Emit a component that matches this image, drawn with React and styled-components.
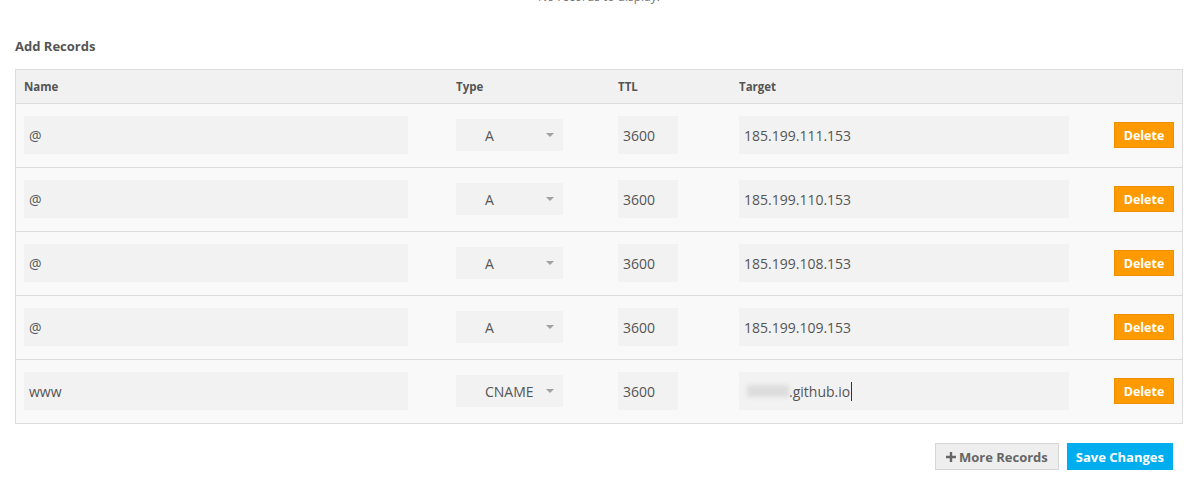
import React from "react";
import styled, { createGlobalStyle } from "styled-components";

const Global = createGlobalStyle`
  html, body { margin: 0; padding: 0; background: #fff; }
  body { font-family: "Open Sans", "Liberation Sans", sans-serif; color: #555; }
  * { box-sizing: border-box; }
`;

const Page = styled.div`
  width: 1183px;
  padding-left: 15px;
`;

const EmptyNote = styled.div`
  margin-top: -10px;
  height: 14px;
  line-height: 14px;
  font-size: 12px;
  color: #777;
  text-align: center;
`;

const Heading = styled.h3`
  margin: 32px 0 0 0;
  height: 20px;
  line-height: 20px;
  font-size: 13px;
  font-weight: 700;
  color: #555;
`;

const Table = styled.div`
  margin-top: 13px;
  border: 1px solid #dcdcdc;
  background: #f9f9f9;
`;

const cols = "432px 162px 121px 375px 1fr";

const HeaderRow = styled.div`
  display: grid;
  grid-template-columns: ${cols};
  align-items: center;
  height: 33px;
  padding-left: 8px;
  background: #f1f1f1;
`;

const HeadCell = styled.div`
  font-size: 11.5px;
  font-weight: 700;
  color: #555;
`;

const Row = styled.div`
  display: grid;
  grid-template-columns: ${cols};
  align-items: center;
  height: 64px;
  padding-left: 8px;
  padding-bottom: 1px;
  border-top: 1px solid #dcdcdc;
`;

const Field = styled.div`
  width: ${(p) => p.$w}px;
  height: 38px;
  background: #f2f2f2;
  padding-left: 5px;
  display: flex;
  align-items: center;
  font-size: 14px;
  color: #555;
  white-space: nowrap;
`;

const Select = styled.div`
  position: relative;
  width: 107px;
  height: 32px;
  background: #f2f2f2;
  padding-left: 29px;
  display: flex;
  align-items: center;
  font-size: 14px;
  color: #555;
`;

const Caret = styled.span`
  position: absolute;
  right: 9px;
  top: 14px;
  width: 0;
  height: 0;
  border-left: 4px solid transparent;
  border-right: 4px solid transparent;
  border-top: 4px solid #a0a0a0;
`;

const Blurred = styled.span`
  display: inline-block;
  width: 42px;
  height: 12px;
  margin-left: 3px;
  background: #dcdcdc;
  filter: blur(2px);
`;

const TextCursor = styled.span`
  display: inline-block;
  width: 1px;
  height: 19px;
  background: #333;
  margin-left: 1px;
`;

const Action = styled.div`
  display: flex;
  justify-content: flex-end;
  padding-right: 8px;
`;

const DeleteBtn = styled.button`
  width: 60px;
  height: 26px;
  border: 1px solid #f09000;
  background: #ff9a00;
  color: #fff;
  font-family: "Open Sans", "Liberation Sans", sans-serif;
  font-size: 12.5px;
  font-weight: 700;
  padding: 0;
  cursor: pointer;
`;

const Footer = styled.div`
  display: flex;
  justify-content: flex-end;
  gap: 8px;
  margin-top: 19px;
  padding-right: 10px;
`;

const Btn = styled.button`
  height: 27px;
  padding: 0 ${(p) => (p.$primary ? 8 : 10)}px;
  border: 1px solid ${(p) => (p.$primary ? "#00aeef" : "#d6d6d6")};
  background: ${(p) => (p.$primary ? "#00aeef" : "#eeeeee")};
  color: ${(p) => (p.$primary ? "#fff" : "#666")};
  font-family: "Open Sans", "Liberation Sans", sans-serif;
  font-size: 13px;
  font-weight: 700;
  display: flex;
  align-items: center;
  gap: 3px;
  cursor: pointer;
`;

const records = [
  { name: "@", type: "A", ttl: "3600", target: "185.199.111.153" },
  { name: "@", type: "A", ttl: "3600", target: "185.199.110.153" },
  { name: "@", type: "A", ttl: "3600", target: "185.199.108.153" },
  { name: "@", type: "A", ttl: "3600", target: "185.199.109.153" },
  { name: "www", type: "CNAME", ttl: "3600", target: ".github.io", hidden: true },
];

const Plus = () => (
  <svg width="10" height="10" viewBox="0 0 10 10">
    <path d="M3.8 0h2.4v3.8H10v2.4H6.2V10H3.8V6.2H0V3.8h3.8z" fill="#666" />
  </svg>
);

export default function App() {
  return (
    <Page>
      <Global />
      <EmptyNote>No records to display.</EmptyNote>
      <Heading>Add Records</Heading>
      <Table>
        <HeaderRow>
          <HeadCell>Name</HeadCell>
          <HeadCell>Type</HeadCell>
          <HeadCell>TTL</HeadCell>
          <HeadCell>Target</HeadCell>
          <HeadCell />
        </HeaderRow>
        {records.map((r, i) => (
          <Row key={i}>
            <Field $w={384}>{r.name}</Field>
            <Select>
              {r.type}
              <Caret />
            </Select>
            <Field $w={60}>{r.ttl}</Field>
            <Field $w={330}>
              {r.hidden && <Blurred />}
              {r.target}
              {r.hidden && <TextCursor />}
            </Field>
            <Action>
              <DeleteBtn>Delete</DeleteBtn>
            </Action>
          </Row>
        ))}
      </Table>
      <Footer>
        <Btn>
          <Plus /> More Records
        </Btn>
        <Btn $primary>Save Changes</Btn>
      </Footer>
    </Page>
  );
}
